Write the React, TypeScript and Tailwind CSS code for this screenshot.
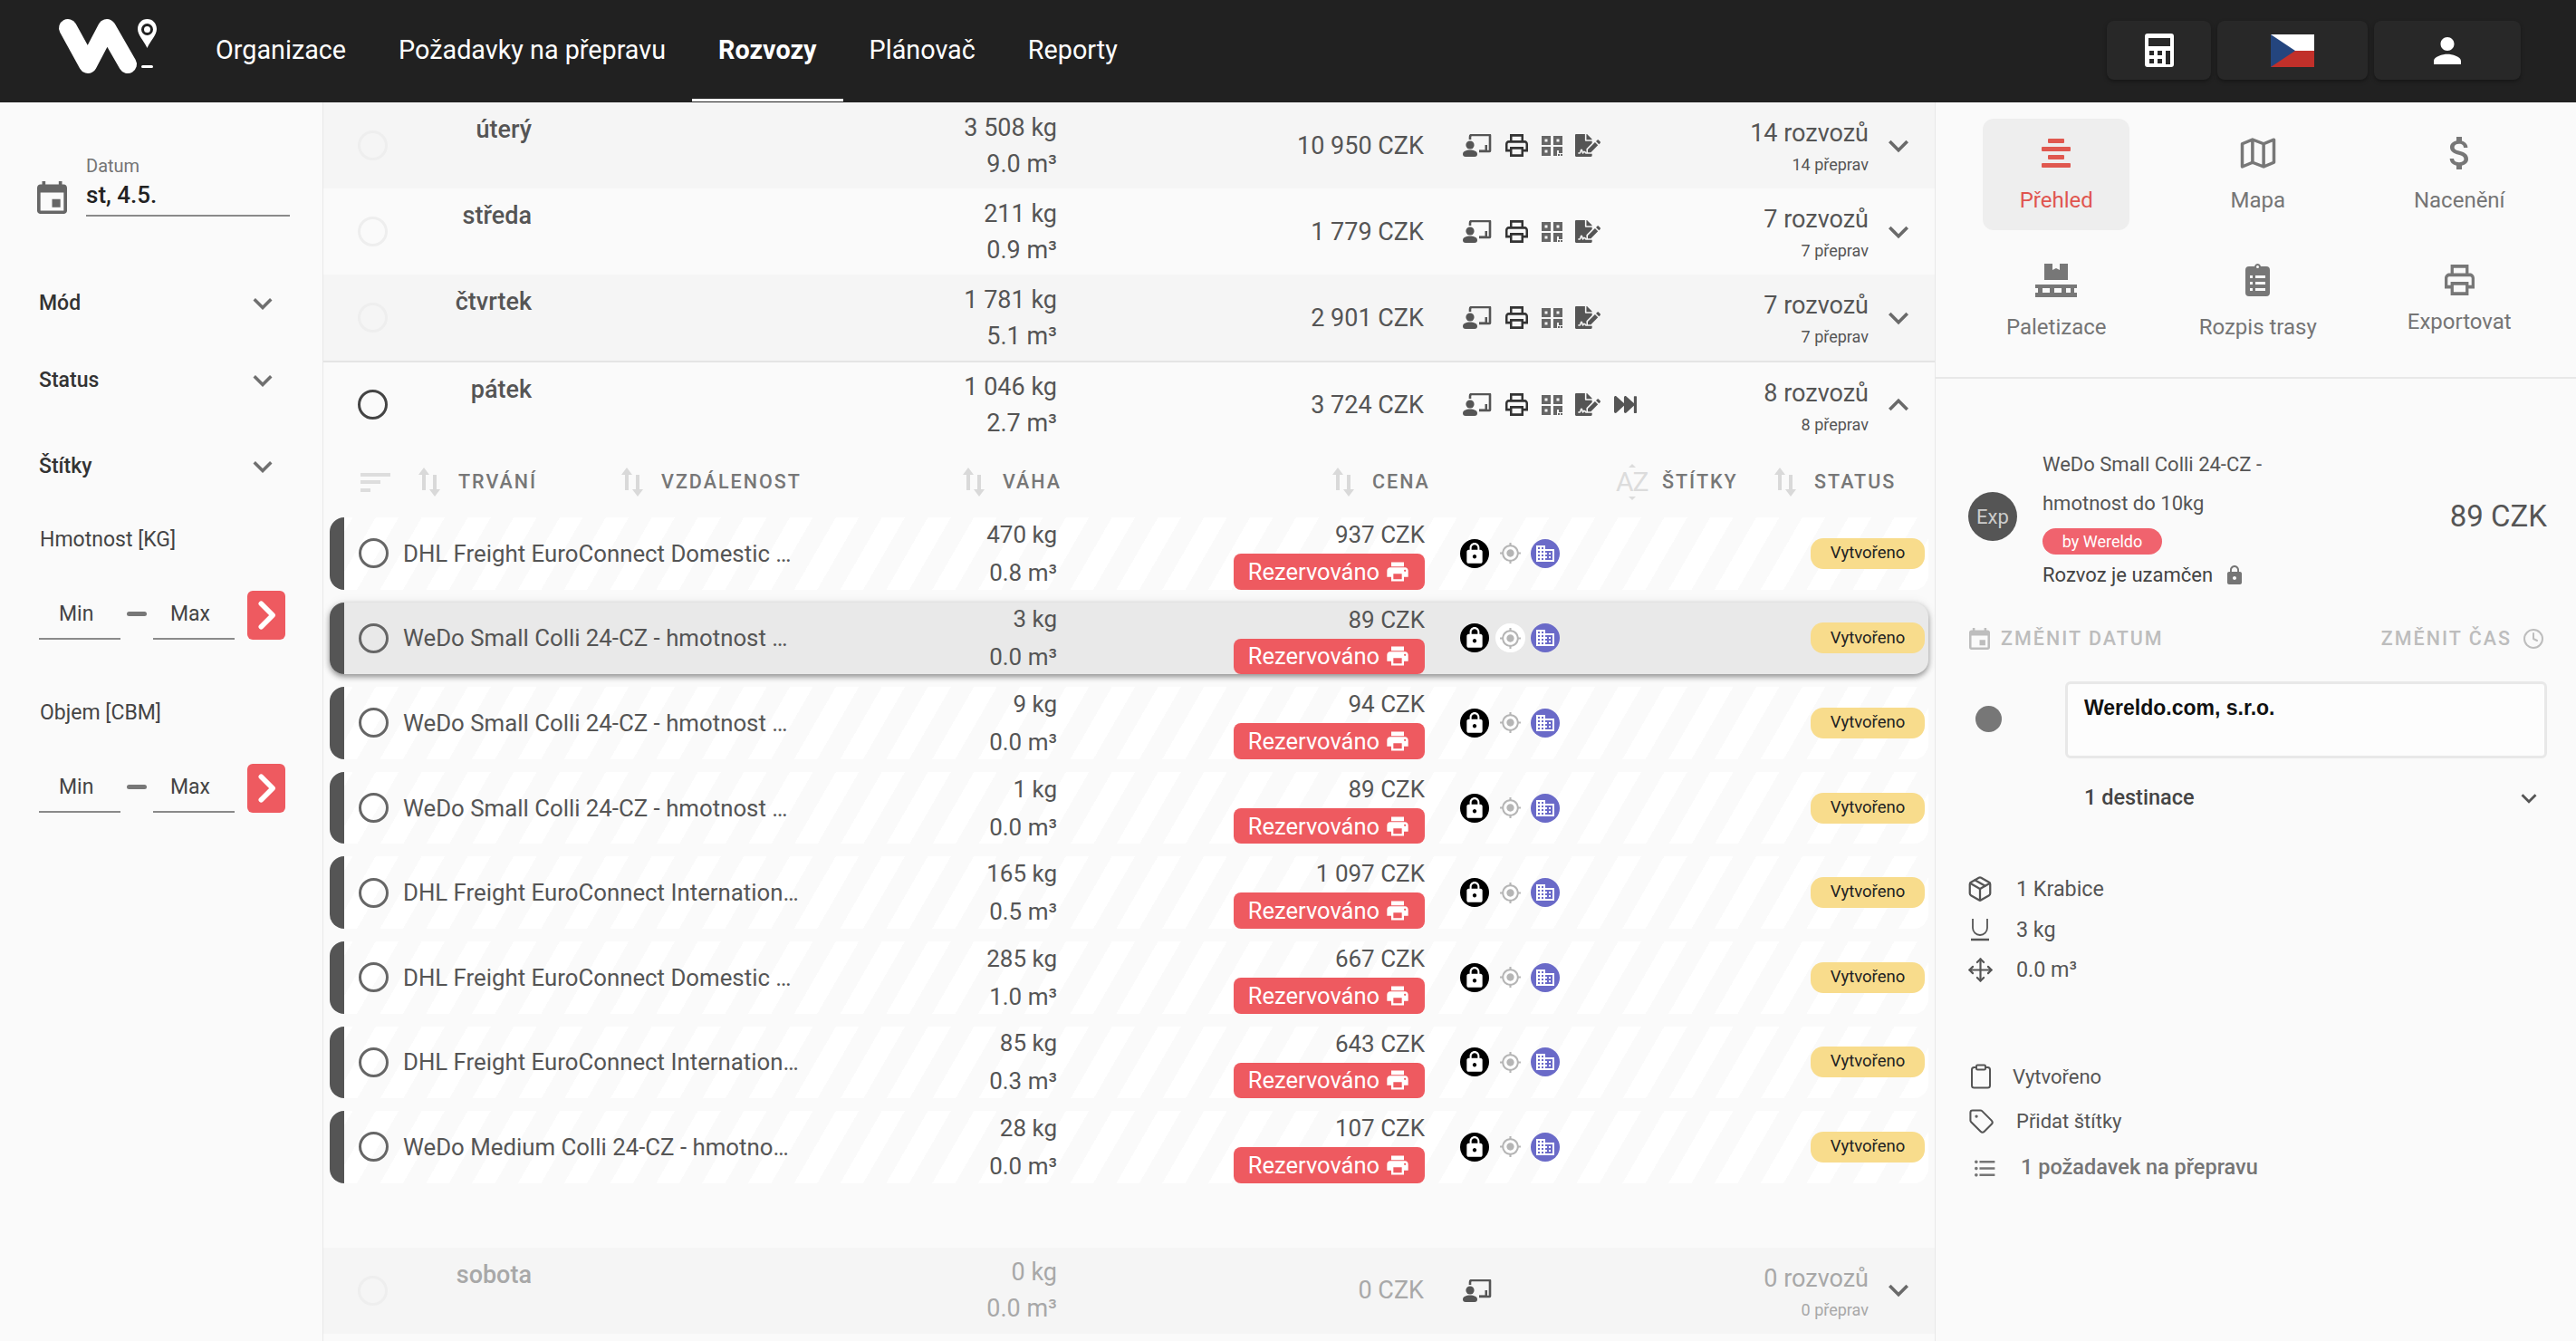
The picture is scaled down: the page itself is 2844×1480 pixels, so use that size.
import React from "react";
import { FaFileSignature, FaFastForward } from "react-icons/fa";
import { MdLock, MdGpsFixed, MdPrint, MdDomain, MdFormatListBulleted } from "react-icons/md";
import { Package, Move, Tag, Clipboard, Clock } from "lucide-react";

const Chevron = ({ up = false, className = "" }: { up?: boolean; className?: string }) => (
  <svg viewBox="0 0 24 24" fill="currentColor" className={`${className} ${up ? "rotate-180" : ""}`}>
    <path d="M16.59 8.59L12 13.17 7.41 8.59 6 10l6 6 6-6z" />
  </svg>
);

const EventIcon = ({ className = "" }: { className?: string }) => (
  <svg viewBox="3 1 18 20" fill="currentColor" preserveAspectRatio="none" className={className}>
    <path d="M17 12h-5v5h5v-5zM16 1v2H8V1H6v2H5c-1.11 0-1.99.9-1.99 2L3 19c0 1.1.89 2 2 2h14c1.1 0 2-.9 2-2V5c0-1.1-.9-2-2-2h-1V1h-2zm3 18H5V8h14v11z" />
  </svg>
);

const Hub = () => (
  <svg viewBox="0 0 32 25" className="w-[32px] h-[25px] shrink-0" fill="#555">
    <path d="M8 6V3a2 2 0 0 1 2-2h19.500a.5.5 0 0 1 .5.5V18.500a.5.5 0 0 1-.5.5H18" fill="none" stroke="#555" strokeWidth="2.600" />
    <path d="M24.500 12h2.500v8h-9v-2.500h6.500z" />
    <circle cx="8" cy="12" r="4.600" />
    <path d="M0 22c0-3 3.500-4.500 8-4.500s8 1.500 8 4.500c0 2-1 3-3 3H3c-2 0-3-1-3-3z" />
  </svg>
);

const PrintOutline = ({ className = "" }: { className?: string }) => (
  <svg viewBox="2 3 20 18" fill="currentColor" preserveAspectRatio="none" className={className}>
    <path d="M19 8h-1V3H6v5H5c-1.66 0-3 1.34-3 3v6h4v4h12v-4h4v-6c0-1.66-1.34-3-3-3zM8 5h8v3H8V5zm8 12v2H8v-4h8v2zm2-2v-2H6v2H4v-4c0-.55.45-1 1-1h14c.55 0 1 .45 1 1v4h-2z" />
  </svg>
);

const Qr = () => (
  <svg viewBox="0 0 23 22" fill="#666" className="w-[23px] h-[22px] shrink-0">
    <path
      fillRule="evenodd"
      d="M0 0h10v10H0zM3.500 3.500v3h3v-3zM13 0h10v10H13zM16.500 3.500v3h3v-3zM0 12h10v10H0zM3.500 15.500v3h3v-3z"
    />
    <path d="M13 12h4v10h-4zM17 12h2v4h-2zM19 12h4v7h-4zM18 20h2v2h-2zM21 20h2v2h-2z" />
  </svg>
);

const Radio = ({ faded = false, dark = false }: { faded?: boolean; dark?: boolean }) => (
  <span
    className={`block w-[33px] h-[33px] rounded-full border-[3px] shrink-0 ${
      faded ? "border-[#eeeeee]" : dark ? "border-[#444444]" : "border-[#666666]"
    }`}
  />
);

const SortArrows = () => (
  <svg viewBox="0 0 24 32" className="w-[24px] h-[32px] shrink-0" fill="#d9d9d9">
    <path d="M6 0l6 8H8v17H4V8H0z" />
    <path d="M18 32l-6-8h4V8h4v16h4z" />
  </svg>
);

const Range = () => (
  <div className="flex ml-[43px] mt-[40px] h-[54px]">
    <div className="w-[90px] border-b-2 border-[#8a8a8a] pl-[22px] pt-[12px] text-[23px] leading-[28px] text-[#444444]">Min</div>
    <div className="w-[22px] h-[5px] rounded bg-[#777777] mx-[7px] mt-[23px]" />
    <div className="w-[90px] border-b-2 border-[#8a8a8a] pl-[19px] pt-[12px] text-[23px] leading-[28px] text-[#444444]">Max</div>
    <div className="ml-[14px] w-[42px] h-[54px] rounded-md bg-[#ee5a60] flex items-center justify-center">
      <svg viewBox="0 0 24 24" className="w-[34px] h-[34px]" fill="none" stroke="#fff" strokeWidth="4" strokeLinecap="round" strokeLinejoin="round">
        <path d="M8 3l9 9-9 9" />
      </svg>
    </div>
  </div>
);

const FilterRow = ({ label, mt }: { label: string; mt: string }) => (
  <div className={`flex items-center justify-between ml-[43px] mr-[45px] h-[32px] ${mt}`}>
    <span className="text-[23px] font-medium text-[#333333]">{label}</span>
    <Chevron className="w-[42px] h-[42px] text-[#6f6f6f] shrink-0" />
  </div>
);

const Sidebar = () => (
  <aside className="w-[357px] shrink-0 border-r border-[#e8e8e8] bg-[#fafafa]">
    <div className="flex ml-[41px] mr-[36px] pt-[58px]">
      <EventIcon className="w-[33px] h-[36px] text-[#666666] mt-[29px] shrink-0" />
      <div className="ml-[21px] flex-1 border-b-2 border-[#8a8a8a] pb-[5px]">
        <div className="text-[20px] leading-[24px] text-[#757575]">Datum</div>
        <div className="text-[26px] leading-[34px] font-medium text-[#222222] mt-[3px]">st, 4.5.</div>
      </div>
    </div>
    <FilterRow label="Mód" mt="mt-[80px]" />
    <FilterRow label="Status" mt="mt-[53px]" />
    <FilterRow label="Štítky" mt="mt-[63px]" />
    <div className="ml-[44px] mt-[49px] text-[23px] leading-[32px] text-[#444444]">Hmotnost [KG]</div>
    <Range />
    <div className="ml-[44px] mt-[65px] text-[23px] leading-[32px] text-[#444444]">Objem [CBM]</div>
    <Range />
  </aside>
);

type Day = { name: string; kg: string; m3: string; czk: string; r: string; p: string; bg: string; faded?: boolean; open?: boolean; dis?: boolean };

const DayRow = ({ d }: { d: Day }) => {
  const tc = d.dis ? "text-[#a8a8a8]" : "text-[#555555]";
  return (
    <div className={`flex h-[95px] shrink-0 ${d.bg} ${d.open ? "border-t-2 border-[#e4e4e4]" : ""}`}>
      <div className="w-[230px] flex justify-between shrink-0">
        <div className="ml-[38px] self-center">
          <Radio faded={d.faded} dark={d.open} />
        </div>
        <div className={`text-[27px] leading-[34px] pt-[13px] font-medium text-right ${tc}`}>{d.name}</div>
      </div>
      <div className={`w-[580px] shrink-0 flex flex-col justify-center text-right text-[27px] leading-[40px] ${tc}`}>
        <div>{d.kg}</div>
        <div>{d.m3}</div>
      </div>
      <div className={`w-[405px] shrink-0 self-center text-right text-[27px] leading-[34px] ${tc}`}>{d.czk}</div>
      <div className="ml-[43px] self-center flex items-center">
        <Hub />
        {!d.dis && (
          <>
            <PrintOutline className="w-[25px] h-[25px] ml-[15px] text-[#333333] shrink-0" />
            <span className="ml-[15px] flex">
              <Qr />
            </span>
            <FaFileSignature className="ml-[14px] w-[28px] h-[25px] text-[#555555] shrink-0" />
            {d.open && <FaFastForward className="ml-[15px] w-[25px] h-[25px] text-[#555555] shrink-0" />}
          </>
        )}
      </div>
      <div className={`ml-auto pt-[17px] text-right ${tc}`}>
        <div className="text-[27px] leading-[34px]">{d.r}</div>
        <div className="text-[18px] leading-[36px]">{d.p}</div>
      </div>
      <div className="ml-[11px] mr-[18px] shrink-0 self-center">
        <Chevron up={d.open} className="w-[44px] h-[44px] text-[#6a6a6a]" />
      </div>
    </div>
  );
};

const HeadCell = ({ w, ml, label }: { w: string; ml: string; label: string }) => (
  <div className={`flex items-center shrink-0 ${w} ${ml}`}>
    <SortArrows />
    <span className="ml-[20px] text-[21.5px] font-medium tracking-[2px] text-[#777777]">{label}</span>
  </div>
);

const TableHead = () => (
  <div className="flex items-center h-[78px] shrink-0">
    <svg viewBox="0 0 33 21" className="ml-[41px] w-[33px] h-[21px] shrink-0" fill="#dddddd">
      <rect width="33" height="4" />
      <rect y="8" width="22" height="4" />
      <rect y="17" width="11" height="4" />
    </svg>
    <HeadCell w="w-[224px]" ml="ml-[31px]" label="TRVÁNÍ" />
    <HeadCell w="w-[377px]" ml="" label="VZDÁLENOST" />
    <HeadCell w="w-[408px]" ml="" label="VÁHA" />
    <HeadCell w="w-[313px]" ml="" label="CENA" />
    <div className="flex items-center w-[175px] shrink-0">
      <span className="relative text-[30px] leading-[34px] tracking-[-1px] text-[#dcdcdc] w-[36px]">
        AZ
        <span className="absolute left-[14px] -top-[3px] w-0 h-0 border-x-[4px] border-x-transparent border-b-[4px] border-b-[#dcdcdc]" />
        <span className="absolute left-[14px] -bottom-[3px] w-0 h-0 border-x-[4px] border-x-transparent border-t-[4px] border-t-[#dcdcdc]" />
      </span>
      <span className="ml-[15px] text-[21.5px] font-medium tracking-[2px] text-[#777777]">ŠTÍTKY</span>
    </div>
    <HeadCell w="" ml="" label="STATUS" />
  </div>
);

const Item = ({ name, kg, m3, czk, sel }: { name: string; kg: string; m3: string; czk: string; sel?: boolean }) => (
  <div
    className={`flex h-[79.6px] shrink-0 rounded-[16px] overflow-visible ${
      sel
        ? "bg-[#e9e9e9] shadow-[0_3px_6px_rgba(0,0,0,0.4),0_0_12px_rgba(0,0,0,0.08)]"
        : "bg-[repeating-linear-gradient(120deg,#ffffff_0,#ffffff_22px,#fafafa_22px,#fafafa_44px)]"
    }`}
  >
    <div className="w-[16px] rounded-l-[16px] bg-[#555555] shrink-0" />
    <div className="ml-[16px] self-center">
      <Radio />
    </div>
    <div className="ml-[16px] w-[446px] shrink-0 self-center whitespace-nowrap text-[25.8px] leading-[32px] text-[#555555]">{name}</div>
    <div className="w-[276px] shrink-0 flex flex-col justify-center text-right text-[26px] leading-[42px] text-[#555555]">
      <div>{kg}</div>
      <div>{m3}</div>
    </div>
    <div className="w-[406px] shrink-0 flex flex-col items-end">
      <div className="text-[26px] leading-[38px] text-[#555555] h-[40px]">{czk}</div>
      <div className="w-[211px] h-[39.6px] rounded-[8px] bg-[#ee5a60] flex items-center justify-center text-white text-[25.5px] leading-[30px]">
        Rezervováno
        <MdPrint className="ml-[6px] w-[28px] h-[28px]" />
      </div>
    </div>
    <div className="ml-[39px] self-center flex gap-[6.5px]">
      <span className="w-[32px] h-[32px] rounded-full bg-black flex items-center justify-center">
        <MdLock className="w-[26px] h-[26px] text-white" />
      </span>
      <span className={`w-[33px] h-[32px] rounded-full flex items-center justify-center ${sel ? "bg-white" : ""}`}>
        <MdGpsFixed className="w-[25px] h-[25px] text-[#b5b5b5]" />
      </span>
      <span className="w-[32px] h-[32px] rounded-full bg-[#6a6ac8] flex items-center justify-center">
        <MdDomain className="w-[24px] h-[24px] text-white" />
      </span>
    </div>
    <div className="ml-auto mr-[4px] self-center w-[126px] h-[34px] rounded-[14px] bg-[#f8dc8c] flex items-center justify-center text-[18.5px] text-[#222222]">
      Vytvořeno
    </div>
  </div>
);

const days: Day[] = [
  { name: "úterý", kg: "3 508 kg", m3: "9.0 m³", czk: "10 950 CZK", r: "14 rozvozů", p: "14 přeprav", bg: "bg-[#f5f5f5]", faded: true },
  { name: "středa", kg: "211 kg", m3: "0.9 m³", czk: "1 779 CZK", r: "7 rozvozů", p: "7 přeprav", bg: "bg-[#fafafa]", faded: true },
  { name: "čtvrtek", kg: "1 781 kg", m3: "5.1 m³", czk: "2 901 CZK", r: "7 rozvozů", p: "7 přeprav", bg: "bg-[#f5f5f5]", faded: true },
  { name: "pátek", kg: "1 046 kg", m3: "2.7 m³", czk: "3 724 CZK", r: "8 rozvozů", p: "8 přeprav", bg: "bg-[#fafafa]", open: true },
];

const items = [
  ["DHL Freight EuroConnect Domestic …", "470 kg", "0.8 m³", "937 CZK"],
  ["WeDo Small Colli 24-CZ - hmotnost …", "3 kg", "0.0 m³", "89 CZK"],
  ["WeDo Small Colli 24-CZ - hmotnost …", "9 kg", "0.0 m³", "94 CZK"],
  ["WeDo Small Colli 24-CZ - hmotnost …", "1 kg", "0.0 m³", "89 CZK"],
  ["DHL Freight EuroConnect Internation…", "165 kg", "0.5 m³", "1 097 CZK"],
  ["DHL Freight EuroConnect Domestic …", "285 kg", "1.0 m³", "667 CZK"],
  ["DHL Freight EuroConnect Internation…", "85 kg", "0.3 m³", "643 CZK"],
  ["WeDo Medium Colli 24-CZ - hmotno…", "28 kg", "0.0 m³", "107 CZK"],
];

const Main = () => (
  <main className="w-[1779px] shrink-0 flex flex-col bg-[#fafafa]">
    {days.map((d) => (
      <DayRow key={d.name} d={d} />
    ))}
    <TableHead />
    <div className="flex flex-col gap-[14px] px-[7px]">
      {items.map((it, i) => (
        <Item key={i} name={it[0]} kg={it[1]} m3={it[2]} czk={it[3]} sel={i === 1} />
      ))}
    </div>
    <div className="mt-[71px]">
      <DayRow d={{ name: "sobota", kg: "0 kg", m3: "0.0 m³", czk: "0 CZK", r: "0 rozvozů", p: "0 přeprav", bg: "bg-[#f5f5f5]", faded: true, dis: true }} />
    </div>
  </main>
);

const Tile = ({ label, icon, active, tall }: { label: string; icon: React.ReactNode; active?: boolean; tall?: boolean }) => (
  <div className="flex justify-center">
    <div className={`w-[162px] h-[123px] rounded-[12px] flex flex-col items-center pt-[18px] ${active ? "bg-[#eeeeee] text-[#e0554f]" : "text-[#757575]"}`}>
      <div className="h-[40px] flex items-center justify-center">{icon}</div>
      <div className={`text-[24px] leading-[30px] ${tall ? "mt-[11px]" : "mt-[17px]"} whitespace-nowrap`}>{label}</div>
    </div>
  </div>
);

const Ico = ({ children }: { children: React.ReactNode }) => <span className="w-[26px] flex justify-center shrink-0">{children}</span>;

const RightPanel = () => (
  <section className="flex-1 border-l border-[#e8e8e8] bg-[#fafafa] flex flex-col text-[#555555]">
    <div className="border-b-2 border-[#e8e8e8] pl-[22px] pt-[18px] pb-[22px]">
      <div className="grid grid-cols-[222.5px_222.5px_222.5px] gap-y-[17px]">
        <Tile
          active
          label="Přehled"
          icon={
            <svg viewBox="0 0 32 32" className="w-[32px] h-[32px]" fill="#e0584f">
              <rect x="7" y="0" width="18" height="5" rx="1" />
              <rect x="0" y="9" width="32" height="5" rx="1" />
              <rect x="7" y="18" width="18" height="5" rx="1" />
              <rect x="0" y="27" width="32" height="5" rx="1" />
            </svg>
          }
        />
        <Tile
          label="Mapa"
          icon={
            <svg viewBox="0 0 24 24" className="w-[42px] h-[38px]" fill="none" stroke="#777" strokeWidth="2" strokeLinejoin="round" preserveAspectRatio="none">
              <path d="M2 5.500v16l6.500-3 7 3 6.500-3v-16l-6.500 3-7-3zM8.500 2.500v16M15.500 5.500v16" />
            </svg>
          }
        />
        <Tile
          label="Nacenění"
          icon={
            <svg viewBox="0 0 24 24" className="w-[48px] h-[48px] ml-[2px]" fill="#777">
              <path d="M11.8 10.900c-2.270-.59-3-1.200-3-2.150 0-1.090 1.010-1.850 2.700-1.850 1.780 0 2.440.85 2.500 2.100h2.210c-.07-1.720-1.120-3.300-3.210-3.810V3h-3v2.160c-1.940.42-3.500 1.680-3.500 3.610 0 2.310 1.910 3.460 4.700 4.130 2.500.6 3 1.480 3 2.410 0 .69-.49 1.790-2.700 1.790-2.060 0-2.870-.92-2.980-2.100h-2.200c.12 2.190 1.760 3.420 3.680 3.830V21h3v-2.150c1.950-.37 3.500-1.500 3.500-3.550 0-2.840-2.430-3.810-4.700-4.400z" />
            </svg>
          }
        />
        <Tile
          label="Paletizace"
          icon={
            <svg viewBox="0 0 46 37" className="w-[46px] h-[37px]" fill="#777">
              <path d="M10 0h9v7l4-2 4 2V0h9v18H10z" />
              <path d="M0 23h46v4h-3v5h3v5H0v-5h3v-5H0zm8 4v5h8v-5zm13 0v5h8v-5zm13 0v5h5v-5z" fillRule="evenodd" />
            </svg>
          }
        />
        <Tile
          label="Rozpis trasy"
          icon={
            <svg viewBox="0 0 27 36" className="w-[27px] h-[36px]" fill="#777">
              <path d="M4 3h6c.6-2 2-3 3.500-3S16.500 1 17 3h6a4 4 0 0 1 4 4v25a4 4 0 0 1-4 4H4a4 4 0 0 1-4-4V7a4 4 0 0 1 4-4zm9.500-1a1.500 1.500 0 1 0 0 3 1.500 1.500 0 0 0 0-3zM5 13v3h3v-3zm6 0v3h11v-3zM5 20v3h3v-3zm6 0v3h11v-3zM5 27v3h3v-3zm6 0v3h11v-3z" fillRule="evenodd" />
            </svg>
          }
        />
        <Tile label="Exportovat" tall icon={<PrintOutline className="w-[33px] h-[34px] text-[#777777]" />} />
      </div>
    </div>

    <div className="flex mt-[73px] ml-[36px] mr-[32px]">
      <div className="w-[54px] h-[54px] rounded-full bg-[#555555] text-[#cccccc] text-[22px] flex items-center justify-center shrink-0 mt-[52px]">Exp</div>
      <div className="ml-[28px]">
        <div className="text-[22px] leading-[43px] text-[#555555]">
          WeDo Small Colli 24-CZ -<br />hmotnost do 10kg
        </div>
        <div className="w-[132px] h-[29px] rounded-full bg-[#f0636e] text-white text-[18px] flex items-center justify-center mt-[6px]">by Wereldo</div>
        <div className="flex items-center mt-[7px] text-[22px] leading-[32px] text-[#444444]">
          Rozvoz je uzamčen
          <MdLock className="ml-[12px] w-[24px] h-[24px] text-[#757575]" />
        </div>
      </div>
      <div className="ml-auto mt-[59px] text-[33px] leading-[40px] text-[#555555]">89 CZK</div>
    </div>

    <div className="flex items-center ml-[37px] mr-[35px] mt-[36px] h-[36px] text-[#bdbdbd] text-[21.5px] font-medium tracking-[2px]">
      <EventIcon className="w-[23px] h-[24px] text-[#bdbdbd]" />
      <span className="ml-[12px]">ZMĚNIT DATUM</span>
      <span className="ml-auto">ZMĚNIT ČAS</span>
      <Clock className="ml-[12px] w-[24px] h-[24px]" strokeWidth={2} />
    </div>

    <div className="flex ml-[44px] mr-[32px] mt-[29px]">
      <span className="w-[29px] h-[29px] rounded-full bg-[#777777] mt-[27px] shrink-0" />
      <div className="ml-[70px] flex-1 h-[85px] border-[3px] border-[#e8e8e8] rounded-[6px] bg-[#fdfdfd] pl-[18px] pt-[10px] [font-family:'Liberation_Sans',sans-serif] font-bold text-[23px] leading-[32px] text-[#111111]">
        Wereldo.com, s.r.o.
      </div>
    </div>

    <div className="flex items-center ml-[164px] mr-[32px] mt-[28px] h-[32px] text-[23.5px] font-medium text-[#444444]">
      1 destinace
      <Chevron className="ml-auto w-[34px] h-[34px] text-[#555555] mr-[3px]" />
    </div>

    <div className="ml-[36px] mt-[68px] flex flex-col gap-[12.5px] text-[23.3px] leading-[32px] text-[#555555]">
      <div className="flex items-center">
        <Ico><Package className="w-[30px] h-[32px] shrink-0" strokeWidth={1.8} /></Ico>
        <span className="ml-[27px]">1 Krabice</span>
      </div>
      <div className="flex items-center">
        <Ico>
          <svg viewBox="0 0 22 26" className="w-[22px] h-[26px] shrink-0" fill="none" stroke="#555" strokeWidth="1.800">
            <path d="M3 1v10a8 8 0 0 0 16 0V1" />
            <path d="M1 24h20" strokeWidth="2.500" />
          </svg>
        </Ico>
        <span className="ml-[27px]">3 kg</span>
      </div>
      <div className="flex items-center">
        <Ico><Move className="w-[29px] h-[29px] shrink-0" strokeWidth={1.8} /></Ico>
        <span className="ml-[27px]">0.0 m³</span>
      </div>
    </div>

    <div className="ml-[37px] mt-[86px] text-[22px] text-[#555555]">
      <div className="flex items-center h-[32px]">
        <Ico><Clipboard className="w-[30px] h-[30px] shrink-0" strokeWidth={1.6} /></Ico>
        <span className="ml-[22px]">Vytvořeno</span>
      </div>
      <div className="flex items-center h-[32px] mt-[17px]">
        <Ico><Tag className="w-[29px] h-[29px] shrink-0" strokeWidth={1.7} /></Ico>
        <span className="ml-[26px]">Přidat štítky</span>
      </div>
      <div className="flex items-center h-[32px] mt-[20px] text-[23.5px] font-medium text-[#757575]">
        <MdFormatListBulleted className="ml-[3px] w-[29px] h-[29px] shrink-0" />
        <span className="ml-[25px]">1 požadavek na přepravu</span>
      </div>
    </div>
  </section>
);

const NavBtn = ({ w, ml, children }: { w: string; ml: string; children: React.ReactNode }) => (
  <div className={`${w} ${ml} h-[65px] rounded-[8px] bg-[#282828] shadow-[0_2px_4px_rgba(0,0,0,0.35)] flex items-center justify-center`}>{children}</div>
);

const Header = () => (
  <header className="h-[113px] shrink-0 bg-[#212121] flex">
    <svg viewBox="50 10 130 80" className="ml-[50px] mt-[10px] w-[130px] h-[80px] shrink-0">
      <path d="M75 31L97 71L118 31L141 71" fill="none" stroke="#fff" strokeWidth="20" strokeLinecap="round" strokeLinejoin="round" />
      <path fillRule="evenodd" fill="#fff" d="M162.500 21c6 0 10.500 4.800 10.500 11 0 6.500-6.800 13-10.500 21-3.700-8-10.500-14.500-10.500-21 0-6.200 4.500-11 10.500-11zm0 5a6.500 6.500 0 1 0 0 13 6.500 6.500 0 0 0 0-13z" />
      <circle cx="162.500" cy="32.500" r="3.500" fill="#fff" />
      <rect x="156" y="72" width="13" height="3" rx="1.500" fill="#fff" />
    </svg>
    <nav className="flex ml-[29px] text-[28.75px] text-white">
      {["Organizace", "Požadavky na přepravu", "Rozvozy", "Plánovač", "Reporty"].map((t) => (
        <div key={t} className={`px-[29px] pt-[2px] flex items-center h-[112px] border-b-[3px] ${t === "Rozvozy" ? "border-white font-bold" : "border-transparent"}`}>
          {t}
        </div>
      ))}
    </nav>
    <div className="ml-auto mr-[61px] mt-[23px] flex">
      <NavBtn w="w-[115px]" ml="">
        <svg viewBox="0 0 32 37" className="w-[32px] h-[37px]">
          <path fillRule="evenodd" fill="#fff" d="M3 0h26a3 3 0 0 1 3 3v31a3 3 0 0 1-3 3H3a3 3 0 0 1-3-3V3a3 3 0 0 1 3-3zm1 5v9h24V5zm1 14v5h5v-5zm9 0v5h5v-5zm9 0v15h5V19zM5 28v5h5v-5zm9 0v5h5v-5z" />
        </svg>
      </NavBtn>
      <NavBtn w="w-[166px]" ml="ml-[7px]">
        <svg viewBox="0 0 48 36" className="w-[48px] h-[36px]">
          <rect width="48" height="18" fill="#fff" />
          <rect y="18" width="48" height="18" fill="#c1302a" />
          <path d="M0 0l27 18L0 36z" fill="#24457e" />
        </svg>
      </NavBtn>
      <NavBtn w="w-[162px]" ml="ml-[7px]">
        <svg viewBox="4 4 16 16" className="w-[30px] h-[30px]" fill="#fff">
          <path d="M12 12c2.210 0 4-1.790 4-4s-1.790-4-4-4-4 1.790-4 4 1.790 4 4 4zm0 2c-2.670 0-8 1.340-8 4v2h16v-2c0-2.660-5.330-4-8-4z" />
        </svg>
      </NavBtn>
    </div>
  </header>
);

export default function App() {
  return (
    <div className="w-[2844px] h-[1480px] overflow-hidden flex flex-col bg-[#fafafa] [font-family:Roboto,sans-serif]">
      <Header />
      <div className="flex flex-1 min-h-0">
        <Sidebar />
        <Main />
        <RightPanel />
      </div>
    </div>
  );
}
